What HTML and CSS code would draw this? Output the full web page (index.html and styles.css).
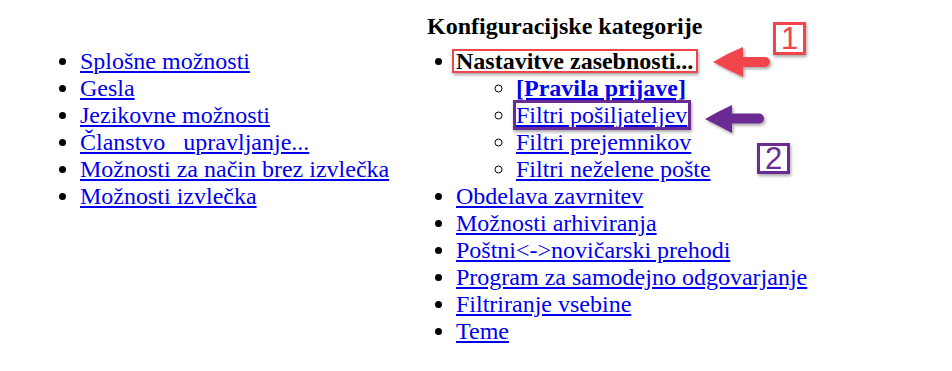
FILE: index.html
```html
<!DOCTYPE html>
<html lang="sl">
<head>
<meta charset="utf-8">
<title>Konfiguracijske kategorije</title>
<link rel="stylesheet" href="styles.css">
</head>
<body>
<div class="page">
  <div class="grid">
    <div class="spacer"></div>
    <div class="heading">Konfiguracijske kategorije</div>
    <ul class="list">
      <li><a href="#">Splošne možnosti</a></li>
      <li><a href="#">Gesla</a></li>
      <li><a href="#">Jezikovne možnosti</a></li>
      <li><a href="#">Članstvo&nbsp;&nbsp;&nbsp;upravljanje...</a></li>
      <li><a href="#">Možnosti za način brez izvlečka</a></li>
      <li><a href="#">Možnosti izvlečka</a></li>
    </ul>
    <ul class="list">
      <li><strong>Nastavitve zasebnosti...</strong>
        <ul class="sub">
          <li><a href="#"><strong>[Pravila prijave]</strong></a></li>
          <li><a href="#">Filtri pošiljateljev</a></li>
          <li><a href="#">Filtri prejemnikov</a></li>
          <li><a href="#">Filtri neželene pošte</a></li>
        </ul>
      </li>
      <li><a href="#">Obdelava zavrnitev</a></li>
      <li><a href="#">Možnosti arhiviranja</a></li>
      <li><a href="#">Poštni&lt;-&gt;novičarski prehodi</a></li>
      <li><a href="#">Program za samodejno odgovarjanje</a></li>
      <li><a href="#">Filtriranje vsebine</a></li>
      <li><a href="#">Teme</a></li>
    </ul>
  </div>

  <div class="mark mark-red"></div>
  <div class="mark mark-purple"></div>
  <div class="num num-red">1</div>
  <div class="num num-purple">2</div>
  <svg class="arrows" width="952" height="371" viewBox="0 0 952 371" xmlns="http://www.w3.org/2000/svg">
    <defs>
      <filter id="sh" x="-20%" y="-20%" width="140%" height="160%">
        <feDropShadow dx="1.5" dy="2" stdDeviation="1.5" flood-color="#000" flood-opacity="0.35"/>
      </filter>
    </defs>
    <path filter="url(#sh)" fill="#f2444b" d="M713,62 Q728,53 743,47 L743,57 L765,57 A5,5 0 0 1 765,67 L743,67 L743,77 Q728,70 713,62 Z"/>
    <path filter="url(#sh)" fill="#6a2b92" d="M705,119 Q719,111 732,105 L732,113.5 L759,113.5 A5,5 0 0 1 759,123.5 L732,123.5 L732,133 Q719,126 705,119 Z"/>
  </svg>
</div>
</body>
</html>
```

FILE: styles.css
```css
html, body {
  margin: 0;
  padding: 0;
  background: #ffffff;
}

.page {
  position: relative;
  width: 952px;
  height: 371px;
  box-sizing: border-box;
  padding: 13px 0 0 20px;
  font-family: "Liberation Serif", "Times New Roman", serif;
  font-size: 24px;
  color: #000;
  overflow: hidden;
}

.grid {
  display: grid;
  grid-template-columns: 376px auto;
  justify-content: start;
  align-items: start;
}

.heading {
  font-weight: bold;
  padding-left: 31px;
}

.list {
  margin: 8px 0 0;
  padding-left: 60px;
  list-style: disc;
}

.sub {
  margin: 0;
  padding-left: 60px;
  list-style: circle;
}

a {
  color: #0000ee;
  text-decoration: underline;
}

.mark {
  position: absolute;
  box-sizing: border-box;
  box-shadow: 1px 2px 3px rgba(0, 0, 0, 0.35);
}

.mark-red {
  left: 452px;
  top: 49px;
  width: 246px;
  height: 24px;
  border: 2px solid #f2444b;
}

.mark-purple {
  left: 513px;
  top: 100px;
  width: 178px;
  height: 30px;
  border: 3px solid #6a2b92;
}

.num {
  position: absolute;
  box-sizing: border-box;
  display: flex;
  align-items: center;
  justify-content: center;
  font-family: "Liberation Sans", Arial, sans-serif;
  font-size: 31px;
  line-height: 1;
  background: #fff;
  box-shadow: 1px 2px 3px rgba(0, 0, 0, 0.35);
}

.num-red {
  left: 773px;
  top: 22px;
  width: 33px;
  height: 33px;
  border: 3px solid #f2444b;
  color: #f2444b;
}

.num-purple {
  left: 757px;
  top: 143px;
  width: 33px;
  height: 31px;
  border: 3px solid #6a2b92;
  color: #6a2b92;
}

.arrows {
  position: absolute;
  left: 0;
  top: 0;
  pointer-events: none;
}
```
